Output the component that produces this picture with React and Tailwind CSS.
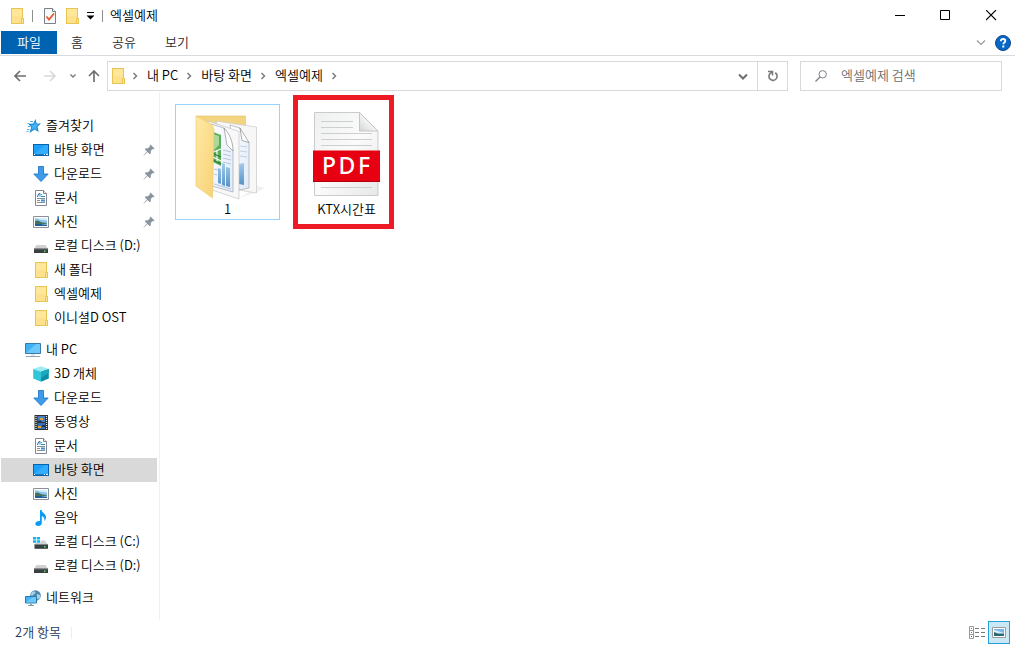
import { useState } from 'react';

const FolderIcon = () => (
  <svg className="size-4 shrink-0" viewBox="0 0 16 16">
    <path d="M2 0h12v10h1v6H2z" fill="#e8c552" />
    <path d="M3 1h10v14H3z" fill="#ffe799" />
    <path d="M3 8h10v7H3z" fill="#fee18d" />
    <path d="M12.500 10.500h2v5h-2z" fill="#ffe799" stroke="#e8c552" />
  </svg>
);

const StarIcon = () => (
  <svg className="size-4 shrink-0" viewBox="0 0 16 16">
    <path d="M10.500 1l1.100 4.400h4.400l-3.500 3.400 1.200 5.200-4.200-2.500-5 3.500 1.700-5.700L3.500 6l4.700-.6z" fill="#1c85d0" />
    <path d="M10.200 3.300l.6 3h3.300l-2.700 2.400.8 3.300-2.800-1.600-3.300 2 1.100-3.600L5.300 6.900l3.500-.5z" fill="#3fb4f8" />
    <path d="M2.500 5.500h2M3 8.500h2M2 11.500h2.500M1.500 13.500h2M5 3.500h3" stroke="#55aee8" />
  </svg>
);

const DesktopIcon = () => (
  <svg className="size-4 shrink-0" viewBox="0 0 16 16">
    <path d="M0 2h16v12H0z" fill="#0963ab" />
    <path d="M1 3h14v9H1z" fill="#18a0fb" />
    <path d="M1 12L12 3h3v9z" fill="#35adfd" />
    <path d="M1 12.500h1m9 0h1m1 0h2" stroke="#fff" />
    <path d="M2 12.500h9" stroke="#1479c7" />
  </svg>
);

const DownloadIcon = () => (
  <svg className="size-4 shrink-0" viewBox="0 0 16 16">
    <path d="M5.500.500h5v7.500h4.700L8 15.500.800 8h4.700z" fill="#3d9be9" stroke="#2379c9" strokeWidth=".9" />
  </svg>
);

const DocumentIcon = () => (
  <svg className="size-4 shrink-0" viewBox="0 0 16 16">
    <path d="M2.500.500h8l3 3v12h-11z" fill="#fff" stroke="#828790" />
    <path d="M10.500.500v3h3" fill="#e9e9e9" stroke="#828790" />
    <path d="M4 6.500h1v-2h1v-1h1v3M8 4.500h1M8 6.500h4" fill="none" stroke="#2b83c9" />
    <path d="M4 8.500h8M4 10.500h3M4 12.500h8" stroke="#7f8f9b" />
    <path d="M8 9.500h4v2H8z" fill="#3f8fcf" />
  </svg>
);

const PictureIcon = () => (
  <svg className="size-4 shrink-0" viewBox="0 0 16 16">
    <path d="M.5 2.500h15v11H.5z" fill="#fff" stroke="#8b9096" />
    <path d="M2 4h12v8H2z" fill="#8cc4ee" />
    <path d="M2 4h12v2.500L8 6z" fill="#d4ebfa" />
    <path d="M2 7l3-.5 4 2 5 .5v1.500H2z" fill="#44705f" />
    <path d="M2 10h12v2H2z" fill="#235d93" />
    <path d="M8 10.500l6-1v1.500z" fill="#8fb9d5" />
  </svg>
);

const DiskIcon = () => (
  <svg className="size-4 shrink-0" viewBox="0 0 16 16">
    <path d="M3.500 7h9L15 11H1z" fill="#cfd1d3" />
    <path d="M1 10.500h14V15H1z" fill="#3c3f42" />
    <path d="M1 10.500h14v.8H1z" fill="#8b8e91" />
    <path d="M11 12.500h1.500V14H11z" fill="#45e05a" />
  </svg>
);

const SystemDiskIcon = () => (
  <svg className="size-4 shrink-0" viewBox="0 0 16 16">
    <path d="M0 3h3v2.500H0zM3.700 3H7v2.500H3.700zM0 6.200h3v2.500H0zM3.700 6.200H7v2.500H3.700z" fill="#12b4f0" />
    <path d="M7.500 6.500h4.500l2.500 4H1.500L2.500 9h5z" fill="#cfd1d3" />
    <path d="M1.500 10.200h13.500v4.600H1.500z" fill="#3c3f42" />
    <path d="M1.500 10.200h13.500v.8H1.500z" fill="#8b8e91" />
    <path d="M11 12h1.500v1.500H11z" fill="#45e05a" />
  </svg>
);

const ComputerIcon = () => (
  <svg className="size-4 shrink-0" viewBox="0 0 16 16">
    <path d="M.5 1.500h15v10H.5z" fill="#3fb1f5" stroke="#3c7ba8" />
    <path d="M1 11L11 2h4v9z" fill="#6bc8fb" />
    <path d="M6 12h4v2H6z" fill="#dfe5e9" />
    <path d="M1 14.500h14" stroke="#8ea3b2" />
  </svg>
);

const CubeIcon = () => (
  <svg className="size-4 shrink-0" viewBox="0 0 16 16">
    <path d="M8 .2L15.800 3 8 5.800.2 3z" fill="#9debf4" />
    <path d="M.2 3L8 5.800v10L.2 12.500z" fill="#31c5d8" />
    <path d="M15.800 3L8 5.800v10l7.800-3.300z" fill="#0b8ea6" />
    <path d="M8 5.800L15.800 3v4L8 12z" fill="#17a9bf" />
  </svg>
);

const VideoIcon = () => (
  <svg className="size-4 shrink-0" viewBox="0 0 16 16">
    <path d="M1.500 1H15v15H1.500z" fill="#2d3035" />
    <path d="M4.500 2h7.500v6H4.500z" fill="#4a7fc8" />
    <path d="M4.500 9h7.500v6H4.500z" fill="#3970b9" />
    <path d="M7 4h3v2H7zM5 12h3v2H5z" fill="#d9a737" />
    <path d="M4.500 6.500h4V8h-4zM9 11h3v2H9z" fill="#1c3552" />
    <path d="M3 2v13M13.500 2v13" stroke="#eee" strokeWidth="1.200" strokeDasharray="1 1" />
  </svg>
);

const MusicIcon = () => (
  <svg className="size-4 shrink-0" viewBox="0 0 16 16">
    <path d="M7 0h1.500c.3 2.500 4.500 3.800 4.500 7 0 1.800-.8 3.200-1.800 4.200.9-3-.6-4.500-2.400-5V13c0 1.800-1.500 3-3.400 3C3.600 16 2.300 15 2.300 13.700c0-1.700 2-3 4.700-2.700z" fill="#0c9cf2" />
  </svg>
);

const NetworkIcon = () => (
  <svg className="size-4 shrink-0" viewBox="0 0 16 16">
    <circle cx="10.500" cy="5.500" r="5.300" fill="#4c87ad" />
    <path d="M7 2c2-.8 3.500-.5 3.500.8S8 4.500 7 6c-1-.5-1.500-2.500 0-4zM12 4l3 1v3l-2 1.500-1.500-2z" fill="#a7d1e6" />
    <path d="M.5 6.500h11v6.500H.5z" fill="#45b4f5" stroke="#2c77ac" />
    <path d="M1 12.500L8 7h3v5.500z" fill="#6fcafb" />
    <path d="M5 13.500h2v1.500H5z" fill="#9aa7b1" />
    <path d="M3 15.500h6" stroke="#8b9aa6" />
  </svg>
);

const PinIcon = () => (
  <svg className="size-3 shrink-0" viewBox="0 0 12 12">
    <path d="M7.500.5l4 4-1 .8-.8-.3-2 2 .1 2.200-1 1L4.600 8 .8 11.500.4 11.200 4 7.400 1.800 5.200l1-1L5 4.300l2-2-.3-.9z" fill="#8a959f" />
  </svg>
);

const CheckPageIcon = () => (
  <svg className="size-4 shrink-0" viewBox="0 0 16 16">
    <path d="M2.500.500h8l3 3v12h-11z" fill="#f8f9fb" stroke="#7b8088" />
    <path d="M10.500.500v3h3" fill="#fff" stroke="#7b8088" />
    <path d="M4.500 8.500l2.500 3 5-6" fill="none" stroke="#e8592b" strokeWidth="1.800" />
  </svg>
);

const Chevron = () => (
  <svg className="h-2 w-[6px] shrink-0" viewBox="0 0 6 8">
    <path d="M1.500 1L4.500 4l-3 3" fill="none" stroke="#7d7d7d" strokeWidth="1.500" />
  </svg>
);

const DocumentFolderArt = () => (
  <svg className="h-[92px] w-[95px]" viewBox="0 0 95 92">
    <defs>
      <linearGradient id="flap" x1="0" y1="0" x2="1" y2="1">
        <stop offset="0" stopColor="#ffe9a6" />
        <stop offset="1" stopColor="#f7d274" />
      </linearGradient>
      <linearGradient id="bars" x1="0" y1="0" x2="0" y2="1">
        <stop offset="0" stopColor="#a5cbe8" />
        <stop offset="1" stopColor="#5593c8" />
      </linearGradient>
      <linearGradient id="sheet" x1="0" y1="0" x2="1" y2="1">
        <stop offset="0" stopColor="#ffffff" />
        <stop offset="1" stopColor="#dfeafb" />
      </linearGradient>
    </defs>
    <path d="M60 90l17-6 8-4-8-2z" fill="#f0f0f0" />
    <path d="M16 8h49.500v12L34 34z" fill="#f3d480" stroke="#e6c260" strokeWidth=".6" />
    <path d="M36 13l40.500 6v66L59 82z" fill="#f7f7f7" stroke="#c9c9c9" strokeWidth=".7" />
    <path d="M50 17l10 3 3 12 6 2.500V80l-10 2z" fill="url(#sheet)" stroke="#a8a8a8" strokeWidth=".7" />
    <path d="M60 20l2 12.500 7 2z" fill="#fff" stroke="#8e8e8e" strokeWidth=".7" />
    <path d="M60 38l7 1M60 43l7 1M60 48l7 1" stroke="#b3bfd0" strokeWidth=".7" />
    <path d="M59 56l5-1v22l-5-1z" fill="url(#bars)" />
    <path d="M28 13l31 10.500V91L32 82z" fill="#f8f8f8" stroke="#c5c5c5" strokeWidth=".7" />
    <path d="M31 16l13 4 9 23v41L32 78z" fill="url(#sheet)" stroke="#9ea8b3" strokeWidth=".7" />
    <path d="M44 20l3 17 6 6c0-10-4-18-9-23z" fill="#fff" stroke="#8e8e8e" strokeWidth=".7" />
    <path d="M43 42l8 2M43 46l8 2M43 50l8 2M43 54l8 2M34 61l7 2M34 66l3 1M34 76l17 5" stroke="#adb9ca" strokeWidth=".8" />
    <path d="M33 24l8 3v31l-8-4z" fill="#5cac59" />
    <path d="M33 26l6 2v9l-6 6z" fill="#a7d99b" />
    <path d="M33 44l8-3M33 49l8 4M37 42v12" fill="none" stroke="#fff" strokeWidth="1.200" />
    <path d="M33 52l8 4M34 46l7 3" stroke="#247c35" strokeWidth="1.200" />
    <path d="M38 60l3 1v15l-3-1zM42 55l3 1v22l-3-1zM46 59l4 1v19l-4-1z" fill="url(#bars)" />
    <path d="M16 8l15 8c2 2 3 4 3 7L32.500 90 16 78z" fill="url(#flap)" stroke="#ebc968" strokeWidth=".6" />
  </svg>
);

const PdfArt = () => (
  <svg className="h-[92px] w-[85px]" viewBox="0 0 85 92">
    <defs>
      <linearGradient id="page" x1="0" y1="0" x2="1" y2="1">
        <stop offset="0" stopColor="#eeefef" />
        <stop offset=".5" stopColor="#fbfbfb" />
        <stop offset="1" stopColor="#e6e7e7" />
      </linearGradient>
      <linearGradient id="fold" x1="0" y1="1" x2="1" y2="0">
        <stop offset="0" stopColor="#d3d5d6" />
        <stop offset=".5" stopColor="#f5f5f5" />
      </linearGradient>
    </defs>
    <path d="M10.500 4.500h45L74 23v64.500H10.500z" fill="url(#page)" stroke="#c9cbcc" />
    <path d="M55.500 4.500v18.500H74z" fill="url(#fold)" stroke="#b9bbbc" strokeWidth=".8" />
    <path d="M17 13.500h32M17 19.500h32M17 25.500h51M17 31.500h51M17 37.500h51M17 79.500h51" stroke="#cccecf" />
    <path d="M9 42.500h67v31.500H9z" fill="#e60012" />
    <path d="M9 73.500h67" stroke="#b3000e" />
    {['P', 'D', 'F'].map((letter, i) => (
      <text key={letter} x={[25, 43, 60][i]} y="66" textAnchor="middle" fill="#fff" fontSize="23" fontWeight="500" fontFamily="Noto Sans, Open Sans, sans-serif">{letter}</text>
    ))}
  </svg>
);

const SECTIONS = [
  {
    title: '즐겨찾기',
    Icon: StarIcon,
    items: [
      { name: '바탕 화면', Icon: DesktopIcon, pinned: true },
      { name: '다운로드', Icon: DownloadIcon, pinned: true },
      { name: '문서', Icon: DocumentIcon, pinned: true },
      { name: '사진', Icon: PictureIcon, pinned: true },
      { name: '로컬 디스크 (D:)', Icon: DiskIcon },
      { name: '새 폴더', Icon: FolderIcon },
      { name: '엑셀예제', Icon: FolderIcon },
      { name: '이니셜D OST', Icon: FolderIcon },
    ],
  },
  {
    title: '내 PC',
    Icon: ComputerIcon,
    items: [
      { name: '3D 개체', Icon: CubeIcon },
      { name: '다운로드', Icon: DownloadIcon },
      { name: '동영상', Icon: VideoIcon },
      { name: '문서', Icon: DocumentIcon },
      { name: '바탕 화면', Icon: DesktopIcon },
      { name: '사진', Icon: PictureIcon },
      { name: '음악', Icon: MusicIcon },
      { name: '로컬 디스크 (C:)', Icon: SystemDiskIcon },
      { name: '로컬 디스크 (D:)', Icon: DiskIcon },
    ],
  },
  { title: '네트워크', Icon: NetworkIcon, items: [] },
];

const CRUMBS = ['내 PC', '바탕 화면', '엑셀예제'];

const TitleBar = () => (
  <header className="flex h-[31px] items-center pr-px">
    <div className="flex flex-1 items-center pl-[9px]">
      <FolderIcon />
      <span className="ml-[7px] h-3 w-px bg-[#8f8f8f]" />
      <button aria-label="속성" className="ml-[9px]"><CheckPageIcon /></button>
      <button aria-label="새 폴더" className="ml-[6px]"><FolderIcon /></button>
      <button aria-label="빠른 실행 도구 모음 사용자 지정" className="ml-[6px]">
        <svg className="h-2 w-2" viewBox="0 0 8 8">
          <path d="M1 .5h7" stroke="#000" />
          <path d="M.5 3.500h8l-4 4z" fill="#000" />
        </svg>
      </button>
      <span className="ml-2 h-3 w-px bg-[#8f8f8f]" />
      <h1 className="ml-[7px] pb-[2px]">엑셀예제</h1>
    </div>
    <button aria-label="최소화" className="flex h-full w-[46px] items-center justify-center">
      <svg className="size-[11px]" viewBox="0 0 11 11"><path d="M1 5.500h10" stroke="#000" /></svg>
    </button>
    <button aria-label="최대화" className="flex h-full w-[46px] items-center justify-center">
      <svg className="size-[11px]" viewBox="0 0 11 11"><path d="M.5.500h9v9h-9z" fill="none" stroke="#000" /></svg>
    </button>
    <button aria-label="닫기" className="flex h-full w-[46px] items-center justify-center">
      <svg className="size-[11px]" viewBox="0 0 11 11"><path d="M0 0l10 10M10 0L0 10" stroke="#000" strokeWidth="1.100" /></svg>
    </button>
  </header>
);

const Ribbon = () => (
  <nav className="flex h-[25px] items-start border-b border-[#dadbdc] pl-px pr-1">
    <button className="h-[23px] w-14 bg-[#0063b1] pb-[2px] text-white">파일</button>
    <button className="h-[23px] w-10 pb-[2px] text-[#2b2b2b]">홈</button>
    <button className="h-[23px] w-[54px] pb-[2px] text-[#2b2b2b]">공유</button>
    <button className="h-[23px] w-[52px] pb-[2px] text-[#2b2b2b]">보기</button>
    <div className="flex h-6 flex-1 items-center justify-end gap-[9px]">
      <button aria-label="리본 확장">
        <svg className="h-[6px] w-[10px]" viewBox="0 0 10 6"><path d="M1 .5l4 4 4-4" fill="none" stroke="#9a9a9a" strokeWidth="1.200" /></svg>
      </button>
      <button aria-label="도움말">
        <svg className="size-4" viewBox="0 0 16 16">
          <circle cx="8" cy="8" r="7.500" fill="#0667c6" stroke="#0b4a8c" />
          <path d="M5.800 6.200c0-1.500 1-2.200 2.300-2.200s2.200.8 2.200 1.900c0 1.600-2 1.600-2 3.300" fill="none" stroke="#fff" strokeWidth="1.800" />
          <path d="M7.300 10.500h2v2h-2z" fill="#fff" />
        </svg>
      </button>
    </div>
  </nav>
);

const AddressBar = () => {
  const [query, setQuery] = useState('');

  return (
    <div className="flex items-center pb-px pl-[5px] pr-[13px] pt-[5px]">
      <button aria-label="뒤로" className="flex h-[30px] w-[30px] items-center justify-center">
        <svg className="size-3" viewBox="0 0 12 12"><path d="M12 6H1M6 1L1 6l5 5" fill="none" stroke="#6f6f6f" strokeWidth="1.700" /></svg>
      </button>
      <button aria-label="앞으로" className="flex h-[30px] w-[30px] items-center justify-center">
        <svg className="size-3" viewBox="0 0 12 12"><path d="M0 6h11M6 1l5 5-5 5" fill="none" stroke="#d9d9d9" strokeWidth="1.700" /></svg>
      </button>
      <button aria-label="최근 위치" className="flex h-[30px] w-4 items-center justify-center">
        <svg className="h-1 w-[6px]" viewBox="0 0 6 4"><path d="M.5.500L3 3 5.500.500" fill="none" stroke="#7b7b7b" strokeWidth="1.400" /></svg>
      </button>
      <button aria-label="위로" className="flex h-[30px] w-[26px] items-center justify-center">
        <svg className="size-3" viewBox="0 0 12 12"><path d="M6 12V1M1 6l5-5 5 5" fill="none" stroke="#6f6f6f" strokeWidth="1.700" /></svg>
      </button>
      <div className="flex h-[30px] flex-1 items-center border border-[#d9d9d9] pl-[2px]">
        <FolderIcon />
        <span className="ml-[6px]"><Chevron /></span>
        <ol className="flex flex-1">
          {CRUMBS.map((name) => (
            <li key={name} className="flex items-center gap-2">
              <button className="pb-[3px] pl-[9px]">{name}</button>
              <Chevron />
            </li>
          ))}
        </ol>
        <button aria-label="이전 위치" className="flex h-full w-[29px] items-center justify-center">
          <svg className="h-[7px] w-[10px]" viewBox="0 0 10 7"><path d="M1 1.500l4 4 4-4" fill="none" stroke="#6d6d6d" strokeWidth="2" /></svg>
        </button>
        <button aria-label="새로 고침" className="flex h-full w-[30px] items-center justify-center border-l border-[#d9d9d9]">
          <svg className="size-3" viewBox="0 0 12 12">
            <path d="M8.200 2.800A4.100 4.100 0 1 1 3 3.500L5 2" fill="none" stroke="#7a7a7a" strokeWidth="1.600" />
            <path d="M1 1.500h4.500v4" fill="none" stroke="#7a7a7a" strokeWidth="1.500" />
          </svg>
        </button>
      </div>
      <label className="ml-3 flex h-[30px] w-[202px] items-center border border-[#d9d9d9] pl-[14px]">
        <svg className="size-3 shrink-0" viewBox="0 0 12 12">
          <circle cx="7.700" cy="4.300" r="3.700" fill="none" stroke="#7d7d86" />
          <path d="M5 7L.5 11.500" stroke="#7d7d86" strokeWidth="1.200" />
        </svg>
        <input
          value={query}
          onChange={(e) => setQuery(e.target.value)}
          aria-label="엑셀예제 검색"
          placeholder="엑셀예제 검색"
          className="ml-[14px] min-w-0 flex-1 pb-[3px] outline-none placeholder:text-[#6d6d6d]"
        />
      </label>
    </div>
  );
};

const Sidebar = ({ selected, onSelect }) => (
  <aside className="flex w-40 shrink-0 flex-col gap-2 border-r border-[#f0f0f0] pb-[10px] pl-px pr-[2px] pt-[22px]">
    {SECTIONS.map(({ title, Icon, items }) => (
      <section key={title}>
        <button className="flex h-6 w-full items-center gap-[5px] pl-6">
          <Icon />
          <span className="pb-[3px]">{title}</span>
        </button>
        {items.map((item) => {
          const id = title + '/' + item.name;
          return (
            <button
              key={id}
              onClick={() => onSelect(id)}
              className={`flex h-6 w-full items-center gap-[5px] whitespace-nowrap pl-8 pr-[2px] ${selected === id ? 'bg-[#d9d9d9]' : 'hover:bg-[#e5f3ff]'}`}
            >
              <item.Icon />
              <span className="flex-1 pb-[3px] text-left">{item.name}</span>
              {item.pinned && <PinIcon />}
            </button>
          );
        })}
      </section>
    ))}
  </aside>
);

const StatusBar = () => (
  <footer className="flex h-[25px] items-center pl-[15px] pr-[5px] text-[#1e395b]">
    <div className="flex flex-1 items-center gap-[10px]">
      <span className="pb-[2px]">2개 항목</span>
      <span className="h-3 w-px bg-[#ededed]" />
    </div>
    <button aria-label="자세히" className="mr-[3px]">
      <svg className="size-4" viewBox="0 0 16 16">
        <path d="M.5 1.500h4v12h-4zM.5 5.500h4M.5 9.500h4" fill="none" stroke="#9a9a9a" />
        <path d="M6 3.500h4m2 0h4M6 7.500h4m2 0h4M6 11.500h4m2 0h4" stroke="#777" />
        <path d="M2 3.500h1" stroke="#3a9a5b" />
        <path d="M2 7.500h1" stroke="#2f8fd0" />
        <path d="M2 11.500h1" stroke="#c0304a" />
      </svg>
    </button>
    <button aria-label="큰 아이콘" className="flex h-[23px] w-[22px] items-center justify-center border border-[#26a0da] bg-[#cbe8f6]">
      <svg className="h-[11px] w-[14px]" viewBox="0 0 14 11">
        <path d="M.5.500h13v10H.5z" fill="#fff" stroke="#9c9c9c" />
        <path d="M2 2h10v7H2z" fill="#79b5e8" />
        <path d="M2 3l4 1 6 2v1H2z" fill="#dceef8" />
        <path d="M2 5l4 1.500h6V9H2z" fill="#2d6875" />
      </svg>
    </button>
  </footer>
);

export default function App() {
  const [selected, setSelected] = useState('내 PC/바탕 화면');

  return (
    <div className="flex min-h-screen flex-col bg-white font-['Noto_Sans_CJK_KR',sans-serif] text-[13px] font-[350] leading-[19px] text-black">
      <TitleBar />
      <Ribbon />
      <AddressBar />
      <div className="flex flex-1">
        <Sidebar selected={selected} onSelect={setSelected} />
        <main className="flex-1 pl-[15px] pt-[3px]">
          <div className="flex items-center gap-[13px]">
            <button className="flex w-[105px] flex-col items-center border border-[#99d1ff] pt-[3px]">
              <DocumentFolderArt />
              <span className="pb-[2px] leading-[17px]">1</span>
            </button>
            <button className="flex w-[101px] flex-col items-center border-5 border-[#ed1c24] pb-[5px] pl-[6px] pt-2">
              <PdfArt />
              <span className="pb-[2px] leading-[17px]">KTX시간표</span>
            </button>
          </div>
        </main>
      </div>
      <StatusBar />
    </div>
  );
}
